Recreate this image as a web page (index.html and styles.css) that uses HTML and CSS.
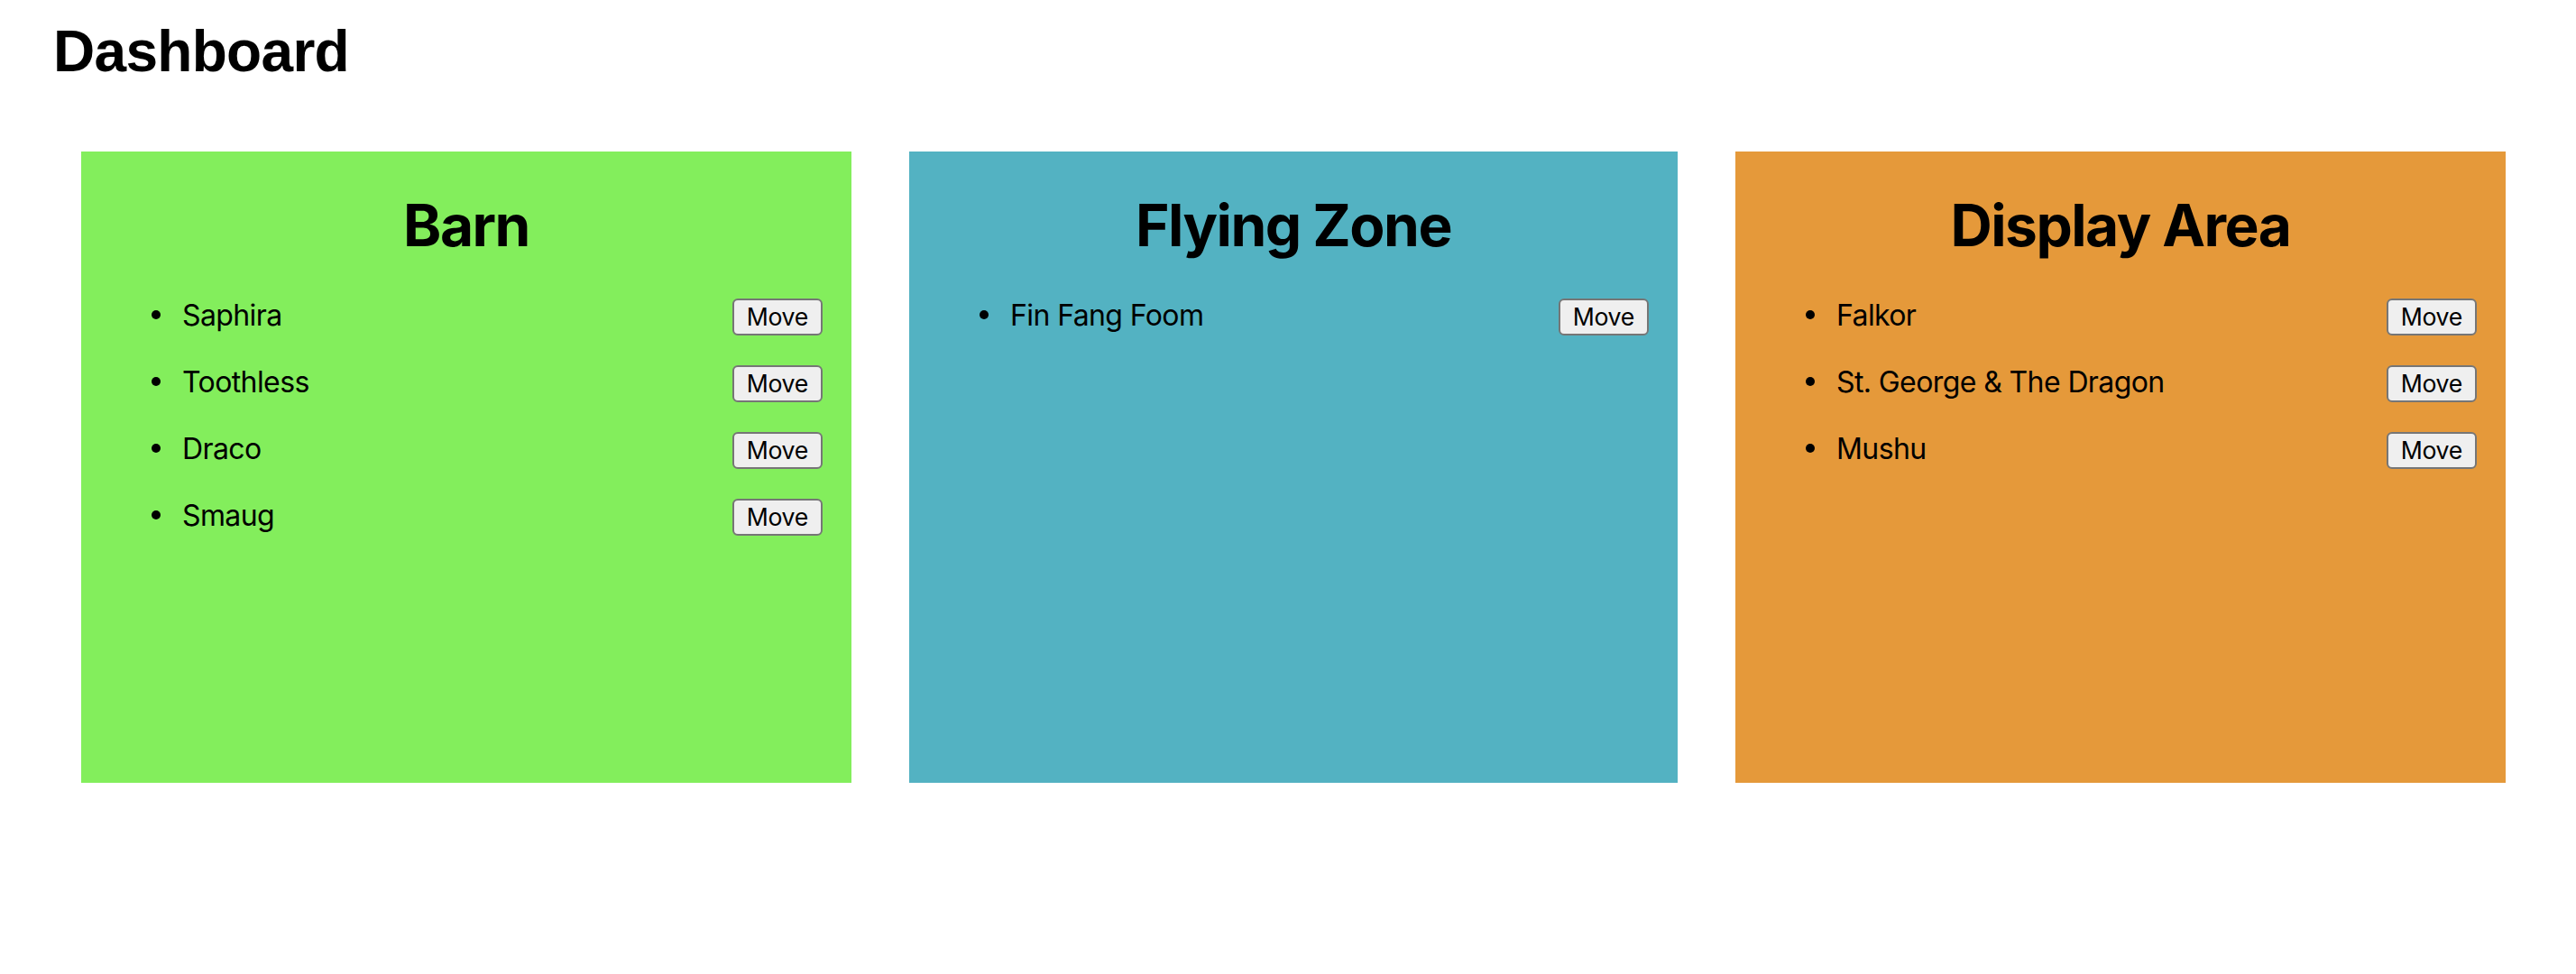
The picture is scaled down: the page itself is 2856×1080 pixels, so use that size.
FILE: index.html
```html
<!DOCTYPE html>
<html lang="en">
<head>
<meta charset="utf-8">
<title>Dashboard</title>
<link rel="stylesheet" href="styles.css">
</head>
<body>
<h1 class="title">Dashboard</h1>
<div class="board">
  <section class="zone zone-barn">
    <h2 class="zone-title">Barn</h2>
    <ul class="dragons">
      <li class="dragon"><span class="name">Saphira</span><button class="move">Move</button></li>
      <li class="dragon"><span class="name">Toothless</span><button class="move">Move</button></li>
      <li class="dragon"><span class="name">Draco</span><button class="move">Move</button></li>
      <li class="dragon"><span class="name">Smaug</span><button class="move">Move</button></li>
    </ul>
  </section>
  <section class="zone zone-flying">
    <h2 class="zone-title">Flying Zone</h2>
    <ul class="dragons">
      <li class="dragon"><span class="name">Fin Fang Foom</span><button class="move">Move</button></li>
    </ul>
  </section>
  <section class="zone zone-display">
    <h2 class="zone-title">Display Area</h2>
    <ul class="dragons">
      <li class="dragon"><span class="name">Falkor</span><button class="move">Move</button></li>
      <li class="dragon"><span class="name">St. George &amp; The Dragon</span><button class="move">Move</button></li>
      <li class="dragon"><span class="name">Mushu</span><button class="move">Move</button></li>
    </ul>
  </section>
</div>
</body>
</html>
```

FILE: styles.css
```css
html, body {
  margin: 0;
  padding: 0;
  background: #ffffff;
  color: #000000;
}

.title {
  font-family: "Liberation Sans", Arial, sans-serif;
  font-weight: bold;
  font-size: 64px;
  line-height: 74px;
  letter-spacing: -0.7px;
  margin: 20px 0 0 59px;
}

.board {
  display: flex;
  gap: 64px;
  padding-left: 90px;
  margin-top: 74px;
}

.zone {
  flex: 0 0 854px;
  height: 700px;
  box-sizing: border-box;
  padding: 32px;
  font-family: Inter, "Noto Sans", sans-serif;
}

.zone-flying {
  flex-basis: 852px;
}

.zone-barn { background: #83ee5c; }
.zone-flying { background: #53b2c2; }
.zone-display { background: #e5993a; }

.zone-title {
  margin: 12px 0 0;
  text-align: center;
  font-size: 64px;
  line-height: 76px;
  font-weight: 700;
  letter-spacing: -1.5px;
}

.dragons {
  list-style: none;
  margin: 43px 0 0;
  padding: 0 0 0 80px;
}

.dragon {
  position: relative;
  display: flex;
  align-items: baseline;
  justify-content: space-between;
  margin-bottom: 33px;
}

.dragon::before {
  content: "";
  position: absolute;
  left: -34px;
  top: 13px;
  width: 10px;
  height: 10px;
  border-radius: 50%;
  background: #000;
}

.name {
  font-size: 32px;
  line-height: 32px;
  letter-spacing: -0.6px;
}

.move {
  font-family: Inter, "Noto Sans", sans-serif;
  font-size: 26.67px;
  line-height: 33px;
  padding: 2px 14px;
  border: 2px solid #767676;
  border-radius: 6px;
  background: #efefef;
  color: #000;
  letter-spacing: -0.3px;
}
```
